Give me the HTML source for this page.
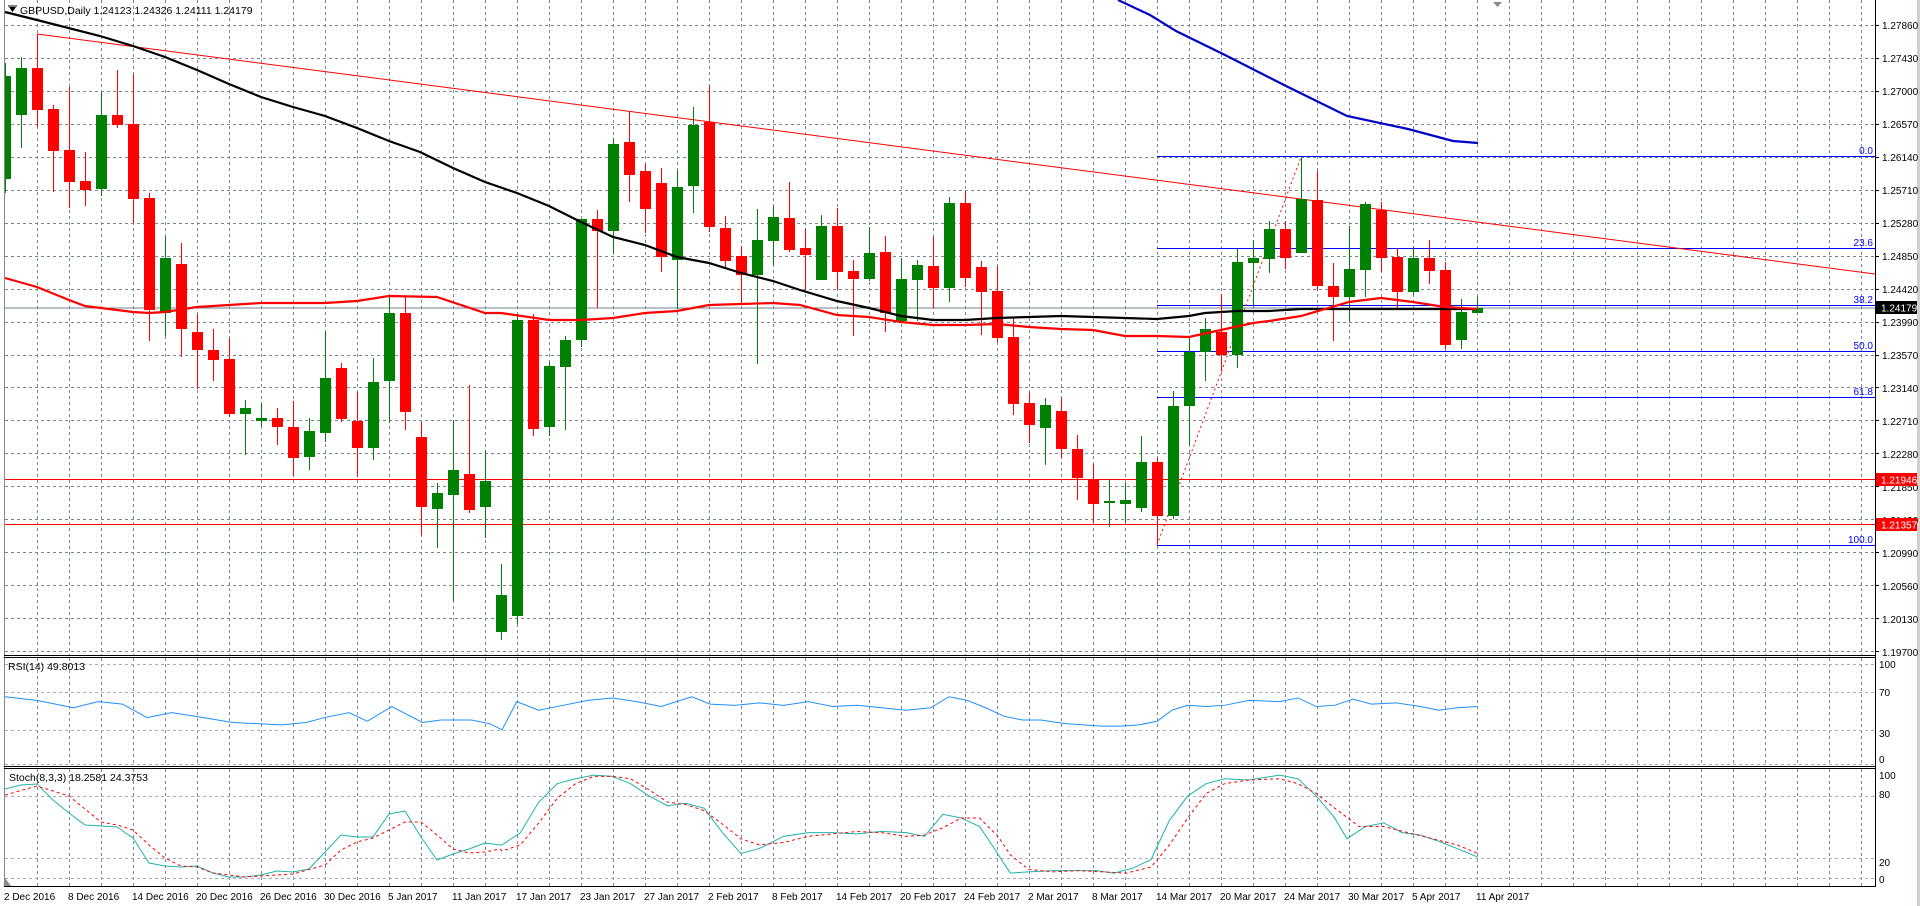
<!DOCTYPE html>
<html><head><meta charset="utf-8">
<style>
html,body{margin:0;padding:0;background:#fff;width:1920px;height:906px;overflow:hidden}
svg{display:block}
text{font-family:"Liberation Sans",sans-serif;font-size:10.5px}
.ax text{font-size:10px}
</style></head>
<body>
<svg id="s" width="1920" height="906" viewBox="0 0 1920 906" xmlns="http://www.w3.org/2000/svg">
<rect x="0" y="0" width="1920" height="906" fill="#fff"/>
<rect x="1917" y="0" width="3" height="906" fill="#d4d0c8"/>
<g id="grid"></g>
<g id="plot"></g>
<g stroke="#000" fill="none" shape-rendering="crispEdges">
<line x1="4.5" y1="0" x2="4.5" y2="887" stroke="#888"/>
<line x1="1875.5" y1="0" x2="1875.5" y2="887"/>
<line x1="4" y1="655.5" x2="1876" y2="655.5"/>
<line x1="4" y1="657.5" x2="1876" y2="657.5"/>
<line x1="4" y1="766.5" x2="1876" y2="766.5"/>
<line x1="4" y1="768.5" x2="1876" y2="768.5"/>
<line x1="4" y1="886.5" x2="1876" y2="886.5"/>
</g>
<polygon points="9,7 16,7 12.5,12" fill="#000"/>
<line x1="8" y1="6" x2="17" y2="6" stroke="#000"/>
<text x="20" y="14" fill="#000">GBPUSD,Daily  1.24123 1.24326 1.24111 1.24179</text>
<polygon points="1493,2 1502,2 1497.5,7" fill="#8a8a8a"/>
<polygon points="5,878 5,886 11,886" fill="#8a8a8a"/>
<text x="8" y="670" fill="#000">RSI(14) 49.8013</text>
<text x="9" y="781" fill="#000">Stoch(8,3,3) 18.2581 24.3753</text>
<g fill="#000" class="ax">
<text x="1882" y="29">1.27860</text>
<text x="1882" y="62">1.27430</text>
<text x="1882" y="95">1.27000</text>
<text x="1882" y="128">1.26570</text>
<text x="1882" y="161">1.26140</text>
<text x="1882" y="194">1.25710</text>
<text x="1882" y="227">1.25280</text>
<text x="1882" y="260">1.24850</text>
<text x="1882" y="293">1.24420</text>
<text x="1882" y="326">1.23990</text>
<text x="1882" y="359">1.23570</text>
<text x="1882" y="392">1.23140</text>
<text x="1882" y="425">1.22710</text>
<text x="1882" y="458">1.22280</text>
<text x="1882" y="491">1.21850</text>
<text x="1882" y="524">1.21420</text>
<text x="1882" y="557">1.20990</text>
<text x="1882" y="590">1.20560</text>
<text x="1882" y="623">1.20130</text>
<text x="1882" y="656">1.19700</text>
<text x="1879" y="668">100</text>
<text x="1879" y="696">70</text>
<text x="1879" y="737">30</text>
<text x="1879" y="763">0</text>
<text x="1879" y="779">100</text>
<text x="1879" y="798">80</text>
<text x="1879" y="866">20</text>
<text x="1879" y="883">0</text>
</g>
<g class="ax">
<rect x="1876" y="301" width="41" height="13" fill="#000"/>
<text x="1881" y="311.5" fill="#fff">1.24179</text>
<rect x="1876" y="473" width="41" height="13" fill="#ff0000"/>
<text x="1881" y="483.5" fill="#fff">1.21946</text>
<rect x="1876" y="518" width="41" height="13" fill="#ff0000"/>
<text x="1881" y="528.5" fill="#fff">1.21357</text>
</g>
<g fill="#0000ff" text-anchor="end">
<text x="1873" y="154" style="font-size:10px">0.0</text>
<text x="1873" y="246" style="font-size:10px">23.6</text>
<text x="1873" y="303" style="font-size:10px">38.2</text>
<text x="1873" y="349" style="font-size:10px">50.0</text>
<text x="1873" y="395" style="font-size:10px">61.8</text>
<text x="1873" y="543" style="font-size:10px">100.0</text>
</g>
<g fill="#000" class="ax">
<text x="4" y="900">2 Dec 2016</text>
<text x="68" y="900">8 Dec 2016</text>
<text x="132" y="900">14 Dec 2016</text>
<text x="196" y="900">20 Dec 2016</text>
<text x="260" y="900">26 Dec 2016</text>
<text x="324" y="900">30 Dec 2016</text>
<text x="388" y="900">5 Jan 2017</text>
<text x="452" y="900">11 Jan 2017</text>
<text x="516" y="900">17 Jan 2017</text>
<text x="580" y="900">23 Jan 2017</text>
<text x="644" y="900">27 Jan 2017</text>
<text x="708" y="900">2 Feb 2017</text>
<text x="772" y="900">8 Feb 2017</text>
<text x="836" y="900">14 Feb 2017</text>
<text x="900" y="900">20 Feb 2017</text>
<text x="964" y="900">24 Feb 2017</text>
<text x="1028" y="900">2 Mar 2017</text>
<text x="1092" y="900">8 Mar 2017</text>
<text x="1156" y="900">14 Mar 2017</text>
<text x="1220" y="900">20 Mar 2017</text>
<text x="1284" y="900">24 Mar 2017</text>
<text x="1348" y="900">30 Mar 2017</text>
<text x="1412" y="900">5 Apr 2017</text>
<text x="1476" y="900">11 Apr 2017</text>
</g>
</svg>
<script>
(function(){
var NS="http://www.w3.org/2000/svg";
function el(p,n,a){var e=document.createElementNS(NS,n);for(var k in a)e.setAttribute(k,a[k]);p.appendChild(e);return e;}
var g=document.getElementById('grid'),p=document.getElementById('plot');
var gc="#7a8696";
for(var x=37;x<1875;x+=32){
 el(g,'line',{x1:x+.5,y1:0,x2:x+.5,y2:655,stroke:gc,'stroke-dasharray':'3,3'});
 el(g,'line',{x1:x+.5,y1:658,x2:x+.5,y2:766,stroke:gc,'stroke-dasharray':'3,3'});
 el(g,'line',{x1:x+.5,y1:769,x2:x+.5,y2:886,stroke:gc,'stroke-dasharray':'3,3'});
}
for(var k=0;k<20;k++){var y=Math.round(25+32.95*k)+.5;
 el(g,'line',{x1:5,y1:y,x2:1875,y2:y,stroke:gc,'stroke-dasharray':'3,3'});
 el(g,'line',{x1:1875,y1:y,x2:1879,y2:y,stroke:'#000'});}
[692.5,730.5,796.5,858.5,664.5,764.5,878.5].forEach(function(y){el(g,'line',{x1:5,y1:y,x2:1875,y2:y,stroke:'#aab',"stroke-dasharray":'3,3'});});
function pl(pts,attr){attr.points=pts.map(function(q){return q[0]+','+q[1]}).join(' ');attr.fill='none';el(p,'polyline',attr);}
el(p,'line',{x1:5,y1:479.5,x2:1875,y2:479.5,stroke:'#f00'});
el(p,'line',{x1:5,y1:524.5,x2:1875,y2:524.5,stroke:'#f00'});
el(p,'line',{x1:5,y1:308,x2:1875,y2:308,stroke:'#708090'});
[156,248,305,351,397,545].forEach(function(y){el(p,'line',{x1:1157,y1:y+.5,x2:1875,y2:y+.5,stroke:'#0000ff'});});
el(p,'line',{x1:1157,y1:545,x2:1301,y2:157,stroke:'#f00','stroke-dasharray':'2,3'});
el(p,'line',{x1:37,y1:34,x2:1875,y2:274,stroke:'#f00'});
var C=[[179,76,63,193],[115,68,57,148],[68,110,34,127],[109,151,105,192],[150,182,87,208],[181,190,152,206],[189,115,92,196],[115,125,70,128],[124,199,74,223],[198,310,193,341],[313,258,237,336],[264,329,243,357],[332,350,314,389],[350,360,329,381],[359,414,338,417],[414,408,400,455],[421,418,403,427],[418,427,408,445],[427,458,401,476],[457,431,418,470],[433,378,331,442],[368,419,363,422],[421,448,392,477],[448,382,358,460],[381,313,297,423],[313,412,297,430],[437,507,422,535],[509,493,483,548],[495,470,420,601],[474,510,385,513],[507,481,450,538],[632,595,564,640],[616,320,314,624],[320,429,314,436],[427,366,362,436],[367,340,336,430],[340,219,219,347],[219,231,210,308],[231,144,138,253],[142,175,111,202],[171,209,164,233],[183,257,168,272],[260,187,170,309],[186,125,107,213],[122,227,86,232],[228,261,216,268],[256,275,246,303],[275,240,209,364],[241,217,206,265],[218,250,182,252],[248,255,229,290],[280,226,215,280],[226,272,208,290],[271,279,260,336],[279,253,227,281],[252,313,236,332],[321,279,258,321],[280,265,260,321],[266,288,237,308],[288,203,197,302],[203,278,191,287],[267,292,261,335],[291,338,266,342],[337,404,317,415],[403,425,393,443],[428,405,398,465],[411,449,398,458],[449,478,435,500],[479,504,464,523],[503,501,479,527],[504,500,483,523],[508,462,436,512],[462,516,458,544],[516,406,391,519],[406,352,338,445],[352,329,318,381],[332,355,294,371],[355,262,249,368],[263,258,240,305],[259,229,221,273],[229,258,221,269],[253,199,157,253],[200,286,171,291],[286,297,263,341],[297,269,226,322],[270,204,202,297],[210,258,202,272],[257,292,248,308],[292,258,246,295],[258,271,240,284],[270,345,262,349],[340,312,299,349],[313,308,297,313]];
C.forEach(function(c,i){var x=5+16*i,up=c[1]<c[0],col=up?'#008000':'#ff0000';
 el(p,'rect',{x:x,y:c[2],width:1,height:c[3]-c[2],fill:col});
 var t=Math.min(c[0],c[1]),b=Math.max(c[0],c[1]);if(b-t<2)b=t+2;
 var l=x-5;if(l<5)l=5;el(p,'rect',{x:l,y:t,width:x+6-l,height:b-t,fill:col});});
pl([[5,12],[37,20],[100,36],[133,46],[165,57],[197,70],[229,84],[261,97],[293,107],[325,116],[357,128],[389,141],[420,152],[453,168],[485,182],[517,193],[549,206],[581,222],[613,237],[645,245],[677,257],[709,263],[741,273],[773,281],[800,290],[837,301],[869,308],[901,316],[933,320],[965,320],[997,318],[1029,317],[1061,316],[1093,317],[1125,318],[1157,319],[1189,316],[1205,313],[1237,311],[1269,311],[1301,309],[1333,309],[1477,309]],{stroke:'#000','stroke-width':2.2});
pl([[5,278],[37,287],[69,300],[85,306],[101,308],[133,312],[149,313],[165,312],[197,307],[229,305],[261,303],[293,303],[325,303],[357,301],[389,296],[437,297],[485,313],[501,313],[549,320],[581,320],[613,318],[645,313],[677,311],[709,305],[741,304],[773,303],[800,305],[837,315],[869,317],[901,322],[933,325],[965,325],[997,324],[1029,327],[1061,329],[1093,330],[1125,336],[1157,336],[1189,337],[1221,330],[1253,323],[1269,321],[1301,316],[1349,302],[1381,298],[1413,302],[1445,307],[1477,309]],{stroke:'#ff0000','stroke-width':2.2});
pl([[1118,0],[1150,15],[1176,31],[1225,55],[1286,86],[1347,116],[1408,129],[1453,141],[1478,143]],{stroke:'#0000c8','stroke-width':2.2});
var S=1.2245;
var R=[[0,569],[30,572],[60,578],[80,573],[100,575],[120,586],[140,582],[160,585],[190,590],[230,592],[250,590],[265,586],[285,582],[300,589],[320,577],[345,590],[360,588],[385,588],[400,591],[410,596],[422,573],[440,580],[460,576],[480,572],[500,570],[520,573],[540,577],[565,569],[580,575],[600,576],[620,574],[640,576],[660,573],[680,577],[700,576],[720,578],[740,580],[760,578],[775,569],[790,572],[805,578],[820,585],[835,588],[850,588],[870,591],[885,592],[900,593],[915,593],[930,592],[945,589],[957,580],[970,576],[985,577],[1000,576],[1020,572],[1045,573],[1060,570],[1075,577],[1090,576],[1105,571],[1120,575],[1140,574],[1160,577],[1175,580],[1190,578],[1207,577]];
pl(R.map(function(q){return [Math.max(5,q[0]*S),q[1]*S]}),{stroke:'#1e90ff'});
var M1=[[5,789],[21,785],[37,784],[53,800],[69,813],[85,825],[101,826],[117,827],[133,838],[149,863],[165,866],[181,867],[197,866],[213,873],[229,877],[245,877],[261,875],[277,871],[293,872],[309,869],[325,852],[341,835],[357,837],[373,837],[389,814],[405,811],[421,837],[437,860],[453,854],[469,849],[485,843],[500,845]];
var M2=[[410,690],[425,680],[440,655],[455,640],[470,636],[485,633],[500,634],[515,640],[530,650],[545,658],[560,656],[575,660],[590,680],[605,697],[620,693],[640,683],[660,680],[680,680],[700,681],[720,679],[740,680],[755,683],[770,665],[785,668],[800,675],[810,690],[825,713],[840,712],[860,711],[880,711],[895,711],[910,713],[925,709],[940,702],[955,670],[970,650],[985,640],[1000,636],[1020,637],[1045,633],[1060,636],[1075,650],[1090,668],[1100,685],[1115,675],[1130,672],[1145,680],[1160,682],[1175,687],[1190,693],[1207,700]];
var G1=[[5,795],[37,786],[69,796],[101,822],[117,825],[133,830],[149,845],[165,858],[181,866],[197,867],[213,873],[245,877],[261,876],[293,874],[325,865],[341,850],[357,842],[373,838],[389,830],[405,822],[421,822],[437,835],[453,849],[469,853],[485,852],[500,849]];
var G2=[[410,695],[425,690],[440,672],[455,652],[470,640],[485,634],[500,634],[515,636],[530,645],[545,655],[560,657],[575,662],[590,673],[605,685],[620,690],[640,688],[660,683],[680,681],[700,679],[720,680],[740,683],[755,682],[770,676],[785,668],[800,668],[815,683],[825,698],[840,710],[860,712],[880,711],[900,712],[920,713],[940,708],[955,690],[970,668],[985,648],[1000,640],[1020,637],[1045,636],[1060,640],[1075,648],[1090,660],[1110,675],[1130,675],[1150,680],[1170,685],[1190,690],[1207,697]];
function sc(a){return a.map(function(q){return [q[0]*S,q[1]*S]})}
pl(M1.concat(sc(M2)),{stroke:'#20b2aa'});
pl(G1.concat(sc(G2)),{stroke:'#ff0000','stroke-dasharray':'3,3'});
})();
</script>
</body></html>
